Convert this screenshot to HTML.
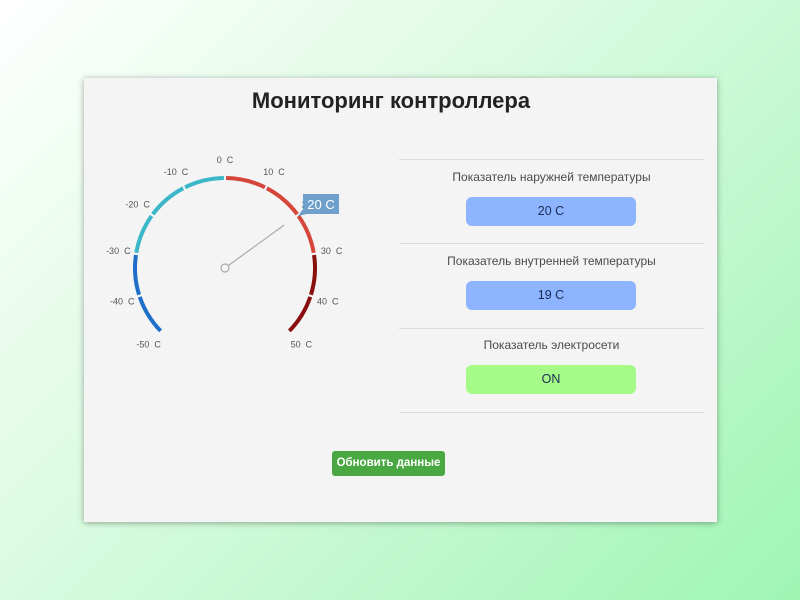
<!DOCTYPE html>
<html><head><meta charset="utf-8"><style>
html,body{margin:0;padding:0;width:800px;height:600px;overflow:hidden}
body{background:linear-gradient(135deg,#ffffff 0%,#dcfbe2 40%,#9ff5b4 100%);font-family:"Liberation Sans","DejaVu Sans",sans-serif;position:relative}
.card{position:absolute;left:84px;top:78px;width:633px;height:444px;background:#f4f4f4;box-shadow:0 1px 6px rgba(0,0,0,.35)}
h1{position:absolute;left:-18px;right:0;top:88px;margin:0;text-align:center;font-size:22px;font-weight:bold;color:#222}
.line{position:absolute;left:399px;width:305px;height:1px;background:#ddd}
.lbl{position:absolute;left:399px;width:305px;text-align:center;font-size:12px;color:#4a4a4a}
.box{position:absolute;left:466px;width:170px;height:29px;border-radius:6px;background:#8db4ff;color:#1a2a55;font-size:12.5px;text-align:center;line-height:29px}
.btn{position:absolute;left:332px;top:451px;width:113px;height:25px;background:#4aa842;border-radius:3px;color:#fff;font-size:11.5px;font-weight:bold;text-align:center;line-height:25px}
svg{position:absolute;left:0;top:0}
</style></head><body>
<div class="card"></div>
<h1>Мониторинг контроллера</h1>
<svg id="g" width="800" height="600"></svg>
<div class="line" style="top:159px"></div>
<div class="lbl" style="top:170px">Показатель наружней температуры</div>
<div class="box" style="top:197px">20 C</div>
<div class="line" style="top:243px"></div>
<div class="lbl" style="top:254px">Показатель внутренней температуры</div>
<div class="box" style="top:281px">19 C</div>
<div class="line" style="top:328px"></div>
<div class="lbl" style="top:338px">Показатель электросети</div>
<div class="box" style="top:365px;background:#a6fb88">ON</div>
<div class="line" style="top:412px"></div>
<div class="btn">Обновить данные</div>
<script>
var cx=225,cy=268,r=90,s='';
function p(a,rr){var t=a*Math.PI/180;return [cx+rr*Math.sin(t),cy-rr*Math.cos(t)];}
function col(v){if(v<-30)return '#1f6fc9';if(v<0)return '#3bb7c9';if(v<30)return '#d6453a';return '#8a1010';}
for(var v=-50;v<50;v+=10){var a1=v*2.7+0.7,a2=(v+10)*2.7-0.7;var P=p(a1,r),Q=p(a2,r);
s+='<path d="M'+P[0]+' '+P[1]+' A'+r+' '+r+' 0 0 1 '+Q[0]+' '+Q[1]+'" fill="none" stroke="'+col(v)+'" stroke-width="4"/>';}
for(var v=-50;v<=50;v+=10){var L=p(v*2.7,108);s+='<text x="'+L[0]+'" y="'+(L[1]+3)+'" font-size="9" fill="#555" text-anchor="middle" font-family="Liberation Sans,sans-serif">'+v+'&#160; C</text>';}
var N=p(54,73);s+='<line x1="'+cx+'" y1="'+cy+'" x2="'+N[0]+'" y2="'+N[1]+'" stroke="#aaa" stroke-width="1.2"/>';
s+='<circle cx="'+cx+'" cy="'+cy+'" r="4" fill="#f6f6f6" stroke="#aaa" stroke-width="1.2"/>';
s+='<rect x="303" y="194" width="36" height="20" fill="#6fa0cc"/><path d="M303 209 L298 216 L307 214Z" fill="#6fa0cc"/>';
s+='<text x="321" y="209" font-size="13" fill="#fff" text-anchor="middle" font-family="Liberation Sans,sans-serif">20 C</text>';
document.getElementById('g').innerHTML=s;
</script>
</body></html>
